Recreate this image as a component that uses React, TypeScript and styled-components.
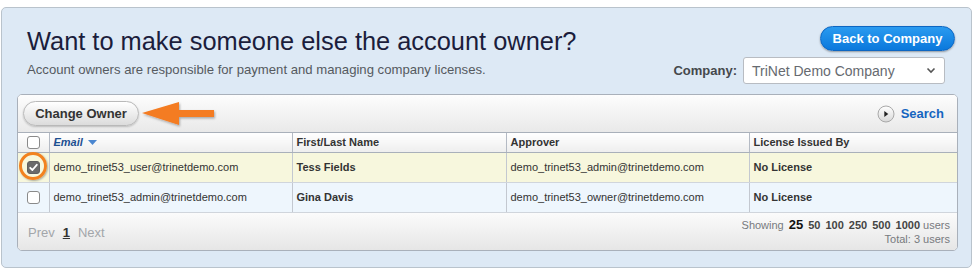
import React from "react";
import styled, { createGlobalStyle } from "styled-components";

const Global = createGlobalStyle`
  html, body { margin: 0; padding: 0; background: #ffffff; }
  body { font-family: "Liberation Sans", Arial, sans-serif; }
  * { box-sizing: border-box; }
`;

const Panel = styled.div`
  margin: 7px 3px 0 1px;
  height: 261px;
  background: #dde9f5;
  border: 1px solid #b9c3cc;
  border-radius: 5px;
  padding: 0 13px 0 15px;
`;

const Header = styled.div`
  height: 86px;
  display: flex;
  justify-content: space-between;
  align-items: flex-start;
`;

const TitleBlock = styled.div`
  padding: 18px 0 0 10px;
`;

const Title = styled.h1`
  margin: 0;
  font-size: 25.4px;
  line-height: 30px;
  font-weight: normal;
  color: #1b1d3c;
`;

const Subtitle = styled.p`
  margin: 6px 0 0 0;
  font-size: 13.15px;
  line-height: 16px;
  color: #555a60;
`;

const RightBlock = styled.div`
  padding-top: 18px;
  display: flex;
  flex-direction: column;
  align-items: flex-end;
`;

const BackButton = styled.button`
  height: 25px;
  width: 135px;
  margin-right: 3px;
  border-radius: 13px;
  border: 1px solid #0d66c2;
  background: linear-gradient(#2a9bf0, #0b78dc);
  color: #ffffff;
  font-family: inherit;
  font-weight: bold;
  font-size: 13px;
  padding: 0;
  box-shadow: 0 1px 2px rgba(0, 0, 0, 0.35);
`;

const CompanyRow = styled.div`
  margin-top: 6px;
  margin-right: 13px;
  display: flex;
  align-items: center;
  gap: 6px;
`;

const CompanyLabel = styled.span`
  font-size: 13px;
  font-weight: bold;
  color: #45484c;
`;

const Select = styled.div`
  width: 202px;
  height: 27px;
  background: #ffffff;
  border: 1px solid #b8bcc2;
  border-radius: 3px;
  display: flex;
  align-items: center;
  justify-content: space-between;
  padding: 0 8px 0 8px;
  font-size: 14px;
  color: #666a70;
`;

const TablePanel = styled.div`
  background: #ffffff;
  border: 1px solid #a9b0ba;
  border-radius: 5px;
  overflow: hidden;
`;

const Toolbar = styled.div`
  height: 38px;
  display: flex;
  align-items: center;
  padding: 0 13px 0 5px;
  background: linear-gradient(#fdfdfd, #e9e9e9);
  border-bottom: 1px solid #a9b0ba;
`;

const ChangeButton = styled.button`
  height: 25px;
  width: 116px;
  border-radius: 13px;
  border: 1px solid #b9b9b9;
  background: linear-gradient(#ffffff, #dcdcdc);
  font-family: inherit;
  font-weight: bold;
  font-size: 13px;
  color: #333333;
  padding: 0;
  box-shadow: 0 1px 2px rgba(0, 0, 0, 0.2);
`;

const Arrow = styled.svg`
  margin-left: 2px;
  display: block;
`;

const Spacer = styled.div`
  flex: 1;
`;

const SearchLink = styled.div`
  display: flex;
  align-items: center;
  gap: 6px;
  font-size: 13px;
  font-weight: bold;
  color: #1565c0;
`;

const Table = styled.table`
  width: 100%;
  border-collapse: collapse;
  table-layout: fixed;
`;

const Th = styled.th<{ $w?: number }>`
  width: ${(p) => (p.$w ? `${p.$w}px` : "auto")};
  height: 19px;
  padding: 0 4px;
  text-align: left;
  font-size: 11px;
  font-weight: bold;
  color: #333;
  background: linear-gradient(#ffffff, #eeeeee);
  border-bottom: 1px solid #a9b0ba;
  border-left: 1px solid #b4bac4;
  &:first-child { border-left: none; text-align: center; }
`;

const SortHead = styled.span`
  color: #1d4f91;
  font-style: italic;
  display: inline-flex;
  align-items: center;
  gap: 5px;
`;

const Tr = styled.tr<{ $selected?: boolean }>`
  background: ${(p) => (p.$selected ? "#f7f7dd" : "#eef6fd")};
`;

const Td = styled.td<{ $bold?: boolean }>`
  height: 30px;
  padding: 0 4px;
  font-size: 11px;
  font-weight: ${(p) => (p.$bold ? "bold" : "normal")};
  color: #333;
  border-left: 1px solid #c3c8d0;
  border-bottom: 1px solid #d0d5dc;
  white-space: nowrap;
  &:first-child { border-left: none; text-align: center; }
`;

const CheckWrap = styled.span`
  position: relative;
  display: inline-block;
  vertical-align: middle;
`;

const Box = styled.span<{ $checked?: boolean }>`
  display: block;
  width: 13px;
  height: 13px;
  border-radius: 3px;
  border: 1px solid ${(p) => (p.$checked ? "#5f5f5f" : "#8a8a8a")};
  background: ${(p) => (p.$checked ? "#6a6a6a" : "#ffffff")};
`;

const Ring = styled.span`
  position: absolute;
  left: -8px;
  top: -9px;
  width: 28px;
  height: 28px;
  border: 3px solid #f2821f;
  border-radius: 50%;
  box-shadow: 1px 1px 2px rgba(0, 0, 0, 0.3);
`;

const Footer = styled.div`
  height: 37px;
  display: flex;
  justify-content: space-between;
  align-items: center;
  padding: 2px 7px 0 10px;
  background: linear-gradient(#fbfbfb, #e6e6e6);
`;

const Pager = styled.div`
  display: flex;
  align-items: center;
  gap: 8px;
  font-size: 13px;
  color: #a3a6aa;
`;

const PageNum = styled.span`
  color: #333;
  font-weight: bold;
  text-decoration: underline;
`;

const Showing = styled.div`
  text-align: right;
  font-size: 11px;
  line-height: 14px;
  color: #777a7e;
`;

const SizeOpt = styled.span<{ $active?: boolean }>`
  color: ${(p) => (p.$active ? "#111" : "#444")};
  font-weight: bold;
  font-size: ${(p) => (p.$active ? "13px" : "11px")};
  margin-left: 5px;
`;

const rows = [
  {
    email: "demo_trinet53_user@trinetdemo.com",
    name: "Tess Fields",
    approver: "demo_trinet53_admin@trinetdemo.com",
    license: "No License",
    selected: true,
  },
  {
    email: "demo_trinet53_admin@trinetdemo.com",
    name: "Gina Davis",
    approver: "demo_trinet53_owner@trinetdemo.com",
    license: "No License",
    selected: false,
  },
];

const Check = () => (
  <svg width="13" height="13" viewBox="0 0 13 13" style={{ position: "absolute", left: 0, top: 0 }}>
    <path d="M3.2 6.8 L5.4 9 L9.8 3.8" fill="none" stroke="#fff" strokeWidth="1.8" strokeLinecap="round" strokeLinejoin="round" />
  </svg>
);

export default function App() {
  return (
    <>
      <Global />
      <Panel>
        <Header>
          <TitleBlock>
            <Title>Want to make someone else the account owner?</Title>
            <Subtitle>Account owners are responsible for payment and managing company licenses.</Subtitle>
          </TitleBlock>
          <RightBlock>
            <BackButton>Back to Company</BackButton>
            <CompanyRow>
              <CompanyLabel>Company:</CompanyLabel>
              <Select>
                <span>TriNet Demo Company</span>
                <svg width="10" height="7" viewBox="0 0 10 7">
                  <path d="M1.5 1.5 L5 5 L8.5 1.5" fill="none" stroke="#555" strokeWidth="1.6" />
                </svg>
              </Select>
            </CompanyRow>
          </RightBlock>
        </Header>
        <TablePanel>
          <Toolbar>
            <ChangeButton>Change Owner</ChangeButton>
            <Arrow width="76" height="28" viewBox="0 0 76 28">
              <defs>
                <filter id="sh" x="-10%" y="-20%" width="130%" height="150%">
                  <feDropShadow dx="1" dy="1.5" stdDeviation="1" floodColor="#000" floodOpacity="0.3" />
                </filter>
              </defs>
              <path d="M1 13 L38 2 L38 10 L73 10 L73 17 L38 17 L38 25 Z" fill="#f47b20" filter="url(#sh)" />
            </Arrow>
            <Spacer />
            <SearchLink>
              <svg width="18" height="18" viewBox="0 0 18 18">
                <defs>
                  <linearGradient id="sg" x1="0" y1="0" x2="0" y2="1">
                    <stop offset="0" stopColor="#ffffff" />
                    <stop offset="1" stopColor="#d8d8d8" />
                  </linearGradient>
                </defs>
                <circle cx="9" cy="9" r="8" fill="url(#sg)" stroke="#a8a8a8" />
                <path d="M7.3 6 L11.3 9 L7.3 12 Z" fill="#222" />
              </svg>
              Search
            </SearchLink>
          </Toolbar>
          <Table>
            <thead>
              <tr>
                <Th $w={31}>
                  <CheckWrap>
                    <Box />
                  </CheckWrap>
                </Th>
                <Th $w={243}>
                  <SortHead>
                    Email
                    <svg width="9" height="5" viewBox="0 0 9 5">
                      <path d="M0 0 L9 0 L4.5 5 Z" fill="#4a86d0" />
                    </svg>
                  </SortHead>
                </Th>
                <Th $w={214}>First/Last Name</Th>
                <Th $w={243}>Approver</Th>
                <Th>License Issued By</Th>
              </tr>
            </thead>
            <tbody>
              {rows.map((r) => (
                <Tr key={r.email} $selected={r.selected}>
                  <Td>
                    <CheckWrap>
                      <Box $checked={r.selected} />
                      {r.selected && <Check />}
                      {r.selected && <Ring />}
                    </CheckWrap>
                  </Td>
                  <Td>{r.email}</Td>
                  <Td $bold>{r.name}</Td>
                  <Td>{r.approver}</Td>
                  <Td $bold>{r.license}</Td>
                </Tr>
              ))}
            </tbody>
          </Table>
          <Footer>
            <Pager>
              <span>Prev</span>
              <PageNum>1</PageNum>
              <span>Next</span>
            </Pager>
            <Showing>
              <div>
                Showing
                <SizeOpt $active>25</SizeOpt>
                <SizeOpt>50</SizeOpt>
                <SizeOpt>100</SizeOpt>
                <SizeOpt>250</SizeOpt>
                <SizeOpt>500</SizeOpt>
                <SizeOpt>1000</SizeOpt> users
              </div>
              <div>Total: 3 users</div>
            </Showing>
          </Footer>
        </TablePanel>
      </Panel>
    </>
  );
}
